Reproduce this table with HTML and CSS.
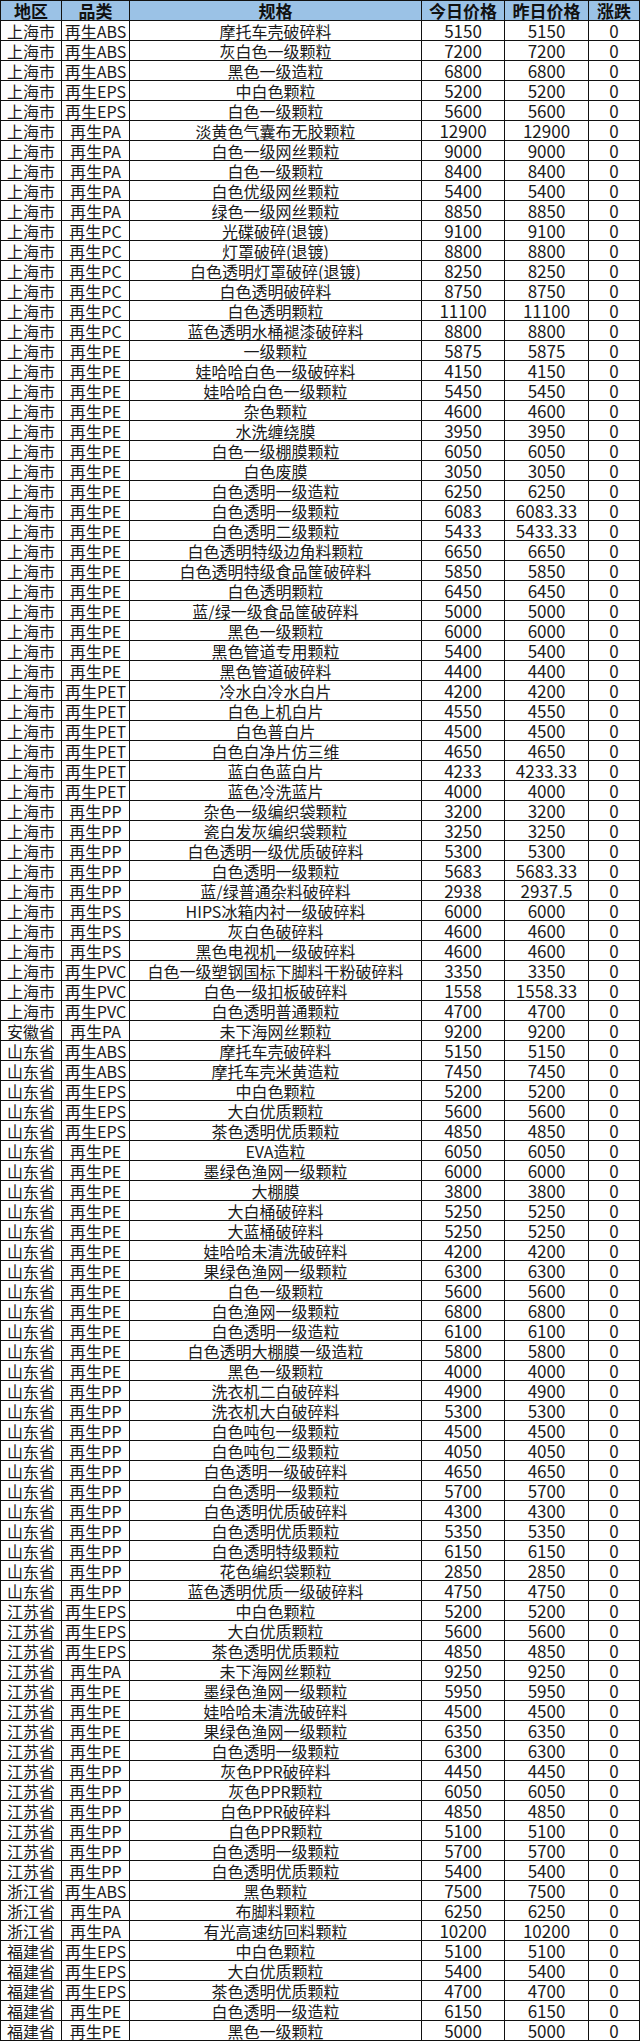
FILE: index.html
```html
<!DOCTYPE html>
<html lang="zh-CN">
<head>
<meta charset="utf-8">
<title>再生塑料价格</title>
<link rel="stylesheet" href="styles.css">
</head>
<body>
<table class="price-table">
<colgroup>
<col class="c-region"><col class="c-cat"><col class="c-spec"><col class="c-today"><col class="c-yest"><col class="c-chg">
</colgroup>
<thead>
<tr><th>地区</th><th>品类</th><th>规格</th><th>今日价格</th><th>昨日价格</th><th>涨跌</th></tr>
</thead>
<tbody>
<tr><td>上海市</td><td>再生ABS</td><td>摩托车壳破碎料</td><td class="num">5150</td><td class="num">5150</td><td class="num">0</td></tr>
<tr><td>上海市</td><td>再生ABS</td><td>灰白色一级颗粒</td><td class="num">7200</td><td class="num">7200</td><td class="num">0</td></tr>
<tr><td>上海市</td><td>再生ABS</td><td>黑色一级造粒</td><td class="num">6800</td><td class="num">6800</td><td class="num">0</td></tr>
<tr><td>上海市</td><td>再生EPS</td><td>中白色颗粒</td><td class="num">5200</td><td class="num">5200</td><td class="num">0</td></tr>
<tr><td>上海市</td><td>再生EPS</td><td>白色一级颗粒</td><td class="num">5600</td><td class="num">5600</td><td class="num">0</td></tr>
<tr><td>上海市</td><td>再生PA</td><td>淡黄色气囊布无胶颗粒</td><td class="num">12900</td><td class="num">12900</td><td class="num">0</td></tr>
<tr><td>上海市</td><td>再生PA</td><td>白色一级网丝颗粒</td><td class="num">9000</td><td class="num">9000</td><td class="num">0</td></tr>
<tr><td>上海市</td><td>再生PA</td><td>白色一级颗粒</td><td class="num">8400</td><td class="num">8400</td><td class="num">0</td></tr>
<tr><td>上海市</td><td>再生PA</td><td>白色优级网丝颗粒</td><td class="num">5400</td><td class="num">5400</td><td class="num">0</td></tr>
<tr><td>上海市</td><td>再生PA</td><td>绿色一级网丝颗粒</td><td class="num">8850</td><td class="num">8850</td><td class="num">0</td></tr>
<tr><td>上海市</td><td>再生PC</td><td>光碟破碎(退镀)</td><td class="num">9100</td><td class="num">9100</td><td class="num">0</td></tr>
<tr><td>上海市</td><td>再生PC</td><td>灯罩破碎(退镀)</td><td class="num">8800</td><td class="num">8800</td><td class="num">0</td></tr>
<tr><td>上海市</td><td>再生PC</td><td>白色透明灯罩破碎(退镀)</td><td class="num">8250</td><td class="num">8250</td><td class="num">0</td></tr>
<tr><td>上海市</td><td>再生PC</td><td>白色透明破碎料</td><td class="num">8750</td><td class="num">8750</td><td class="num">0</td></tr>
<tr><td>上海市</td><td>再生PC</td><td>白色透明颗粒</td><td class="num">11100</td><td class="num">11100</td><td class="num">0</td></tr>
<tr><td>上海市</td><td>再生PC</td><td>蓝色透明水桶褪漆破碎料</td><td class="num">8800</td><td class="num">8800</td><td class="num">0</td></tr>
<tr><td>上海市</td><td>再生PE</td><td>一级颗粒</td><td class="num">5875</td><td class="num">5875</td><td class="num">0</td></tr>
<tr><td>上海市</td><td>再生PE</td><td>娃哈哈白色一级破碎料</td><td class="num">4150</td><td class="num">4150</td><td class="num">0</td></tr>
<tr><td>上海市</td><td>再生PE</td><td>娃哈哈白色一级颗粒</td><td class="num">5450</td><td class="num">5450</td><td class="num">0</td></tr>
<tr><td>上海市</td><td>再生PE</td><td>杂色颗粒</td><td class="num">4600</td><td class="num">4600</td><td class="num">0</td></tr>
<tr><td>上海市</td><td>再生PE</td><td>水洗缠绕膜</td><td class="num">3950</td><td class="num">3950</td><td class="num">0</td></tr>
<tr><td>上海市</td><td>再生PE</td><td>白色一级棚膜颗粒</td><td class="num">6050</td><td class="num">6050</td><td class="num">0</td></tr>
<tr><td>上海市</td><td>再生PE</td><td>白色废膜</td><td class="num">3050</td><td class="num">3050</td><td class="num">0</td></tr>
<tr><td>上海市</td><td>再生PE</td><td>白色透明一级造粒</td><td class="num">6250</td><td class="num">6250</td><td class="num">0</td></tr>
<tr><td>上海市</td><td>再生PE</td><td>白色透明一级颗粒</td><td class="num">6083</td><td class="num">6083.33</td><td class="num">0</td></tr>
<tr><td>上海市</td><td>再生PE</td><td>白色透明二级颗粒</td><td class="num">5433</td><td class="num">5433.33</td><td class="num">0</td></tr>
<tr><td>上海市</td><td>再生PE</td><td>白色透明特级边角料颗粒</td><td class="num">6650</td><td class="num">6650</td><td class="num">0</td></tr>
<tr><td>上海市</td><td>再生PE</td><td>白色透明特级食品筐破碎料</td><td class="num">5850</td><td class="num">5850</td><td class="num">0</td></tr>
<tr><td>上海市</td><td>再生PE</td><td>白色透明颗粒</td><td class="num">6450</td><td class="num">6450</td><td class="num">0</td></tr>
<tr><td>上海市</td><td>再生PE</td><td>蓝/绿一级食品筐破碎料</td><td class="num">5000</td><td class="num">5000</td><td class="num">0</td></tr>
<tr><td>上海市</td><td>再生PE</td><td>黑色一级颗粒</td><td class="num">6000</td><td class="num">6000</td><td class="num">0</td></tr>
<tr><td>上海市</td><td>再生PE</td><td>黑色管道专用颗粒</td><td class="num">5400</td><td class="num">5400</td><td class="num">0</td></tr>
<tr><td>上海市</td><td>再生PE</td><td>黑色管道破碎料</td><td class="num">4400</td><td class="num">4400</td><td class="num">0</td></tr>
<tr><td>上海市</td><td>再生PET</td><td>冷水白冷水白片</td><td class="num">4200</td><td class="num">4200</td><td class="num">0</td></tr>
<tr><td>上海市</td><td>再生PET</td><td>白色上机白片</td><td class="num">4550</td><td class="num">4550</td><td class="num">0</td></tr>
<tr><td>上海市</td><td>再生PET</td><td>白色普白片</td><td class="num">4500</td><td class="num">4500</td><td class="num">0</td></tr>
<tr><td>上海市</td><td>再生PET</td><td>白色白净片仿三维</td><td class="num">4650</td><td class="num">4650</td><td class="num">0</td></tr>
<tr><td>上海市</td><td>再生PET</td><td>蓝白色蓝白片</td><td class="num">4233</td><td class="num">4233.33</td><td class="num">0</td></tr>
<tr><td>上海市</td><td>再生PET</td><td>蓝色冷洗蓝片</td><td class="num">4000</td><td class="num">4000</td><td class="num">0</td></tr>
<tr><td>上海市</td><td>再生PP</td><td>杂色一级编织袋颗粒</td><td class="num">3200</td><td class="num">3200</td><td class="num">0</td></tr>
<tr><td>上海市</td><td>再生PP</td><td>瓷白发灰编织袋颗粒</td><td class="num">3250</td><td class="num">3250</td><td class="num">0</td></tr>
<tr><td>上海市</td><td>再生PP</td><td>白色透明一级优质破碎料</td><td class="num">5300</td><td class="num">5300</td><td class="num">0</td></tr>
<tr><td>上海市</td><td>再生PP</td><td>白色透明一级颗粒</td><td class="num">5683</td><td class="num">5683.33</td><td class="num">0</td></tr>
<tr><td>上海市</td><td>再生PP</td><td>蓝/绿普通杂料破碎料</td><td class="num">2938</td><td class="num">2937.5</td><td class="num">0</td></tr>
<tr><td>上海市</td><td>再生PS</td><td>HIPS冰箱内衬一级破碎料</td><td class="num">6000</td><td class="num">6000</td><td class="num">0</td></tr>
<tr><td>上海市</td><td>再生PS</td><td>灰白色破碎料</td><td class="num">4600</td><td class="num">4600</td><td class="num">0</td></tr>
<tr><td>上海市</td><td>再生PS</td><td>黑色电视机一级破碎料</td><td class="num">4600</td><td class="num">4600</td><td class="num">0</td></tr>
<tr><td>上海市</td><td>再生PVC</td><td>白色一级塑钢国标下脚料干粉破碎料</td><td class="num">3350</td><td class="num">3350</td><td class="num">0</td></tr>
<tr><td>上海市</td><td>再生PVC</td><td>白色一级扣板破碎料</td><td class="num">1558</td><td class="num">1558.33</td><td class="num">0</td></tr>
<tr><td>上海市</td><td>再生PVC</td><td>白色透明普通颗粒</td><td class="num">4700</td><td class="num">4700</td><td class="num">0</td></tr>
<tr><td>安徽省</td><td>再生PA</td><td>未下海网丝颗粒</td><td class="num">9200</td><td class="num">9200</td><td class="num">0</td></tr>
<tr><td>山东省</td><td>再生ABS</td><td>摩托车壳破碎料</td><td class="num">5150</td><td class="num">5150</td><td class="num">0</td></tr>
<tr><td>山东省</td><td>再生ABS</td><td>摩托车壳米黄造粒</td><td class="num">7450</td><td class="num">7450</td><td class="num">0</td></tr>
<tr><td>山东省</td><td>再生EPS</td><td>中白色颗粒</td><td class="num">5200</td><td class="num">5200</td><td class="num">0</td></tr>
<tr><td>山东省</td><td>再生EPS</td><td>大白优质颗粒</td><td class="num">5600</td><td class="num">5600</td><td class="num">0</td></tr>
<tr><td>山东省</td><td>再生EPS</td><td>茶色透明优质颗粒</td><td class="num">4850</td><td class="num">4850</td><td class="num">0</td></tr>
<tr><td>山东省</td><td>再生PE</td><td>EVA造粒</td><td class="num">6050</td><td class="num">6050</td><td class="num">0</td></tr>
<tr><td>山东省</td><td>再生PE</td><td>墨绿色渔网一级颗粒</td><td class="num">6000</td><td class="num">6000</td><td class="num">0</td></tr>
<tr><td>山东省</td><td>再生PE</td><td>大棚膜</td><td class="num">3800</td><td class="num">3800</td><td class="num">0</td></tr>
<tr><td>山东省</td><td>再生PE</td><td>大白桶破碎料</td><td class="num">5250</td><td class="num">5250</td><td class="num">0</td></tr>
<tr><td>山东省</td><td>再生PE</td><td>大蓝桶破碎料</td><td class="num">5250</td><td class="num">5250</td><td class="num">0</td></tr>
<tr><td>山东省</td><td>再生PE</td><td>娃哈哈未清洗破碎料</td><td class="num">4200</td><td class="num">4200</td><td class="num">0</td></tr>
<tr><td>山东省</td><td>再生PE</td><td>果绿色渔网一级颗粒</td><td class="num">6300</td><td class="num">6300</td><td class="num">0</td></tr>
<tr><td>山东省</td><td>再生PE</td><td>白色一级颗粒</td><td class="num">5600</td><td class="num">5600</td><td class="num">0</td></tr>
<tr><td>山东省</td><td>再生PE</td><td>白色渔网一级颗粒</td><td class="num">6800</td><td class="num">6800</td><td class="num">0</td></tr>
<tr><td>山东省</td><td>再生PE</td><td>白色透明一级造粒</td><td class="num">6100</td><td class="num">6100</td><td class="num">0</td></tr>
<tr><td>山东省</td><td>再生PE</td><td>白色透明大棚膜一级造粒</td><td class="num">5800</td><td class="num">5800</td><td class="num">0</td></tr>
<tr><td>山东省</td><td>再生PE</td><td>黑色一级颗粒</td><td class="num">4000</td><td class="num">4000</td><td class="num">0</td></tr>
<tr><td>山东省</td><td>再生PP</td><td>洗衣机二白破碎料</td><td class="num">4900</td><td class="num">4900</td><td class="num">0</td></tr>
<tr><td>山东省</td><td>再生PP</td><td>洗衣机大白破碎料</td><td class="num">5300</td><td class="num">5300</td><td class="num">0</td></tr>
<tr><td>山东省</td><td>再生PP</td><td>白色吨包一级颗粒</td><td class="num">4500</td><td class="num">4500</td><td class="num">0</td></tr>
<tr><td>山东省</td><td>再生PP</td><td>白色吨包二级颗粒</td><td class="num">4050</td><td class="num">4050</td><td class="num">0</td></tr>
<tr><td>山东省</td><td>再生PP</td><td>白色透明一级破碎料</td><td class="num">4650</td><td class="num">4650</td><td class="num">0</td></tr>
<tr><td>山东省</td><td>再生PP</td><td>白色透明一级颗粒</td><td class="num">5700</td><td class="num">5700</td><td class="num">0</td></tr>
<tr><td>山东省</td><td>再生PP</td><td>白色透明优质破碎料</td><td class="num">4300</td><td class="num">4300</td><td class="num">0</td></tr>
<tr><td>山东省</td><td>再生PP</td><td>白色透明优质颗粒</td><td class="num">5350</td><td class="num">5350</td><td class="num">0</td></tr>
<tr><td>山东省</td><td>再生PP</td><td>白色透明特级颗粒</td><td class="num">6150</td><td class="num">6150</td><td class="num">0</td></tr>
<tr><td>山东省</td><td>再生PP</td><td>花色编织袋颗粒</td><td class="num">2850</td><td class="num">2850</td><td class="num">0</td></tr>
<tr><td>山东省</td><td>再生PP</td><td>蓝色透明优质一级破碎料</td><td class="num">4750</td><td class="num">4750</td><td class="num">0</td></tr>
<tr><td>江苏省</td><td>再生EPS</td><td>中白色颗粒</td><td class="num">5200</td><td class="num">5200</td><td class="num">0</td></tr>
<tr><td>江苏省</td><td>再生EPS</td><td>大白优质颗粒</td><td class="num">5600</td><td class="num">5600</td><td class="num">0</td></tr>
<tr><td>江苏省</td><td>再生EPS</td><td>茶色透明优质颗粒</td><td class="num">4850</td><td class="num">4850</td><td class="num">0</td></tr>
<tr><td>江苏省</td><td>再生PA</td><td>未下海网丝颗粒</td><td class="num">9250</td><td class="num">9250</td><td class="num">0</td></tr>
<tr><td>江苏省</td><td>再生PE</td><td>墨绿色渔网一级颗粒</td><td class="num">5950</td><td class="num">5950</td><td class="num">0</td></tr>
<tr><td>江苏省</td><td>再生PE</td><td>娃哈哈未清洗破碎料</td><td class="num">4500</td><td class="num">4500</td><td class="num">0</td></tr>
<tr><td>江苏省</td><td>再生PE</td><td>果绿色渔网一级颗粒</td><td class="num">6350</td><td class="num">6350</td><td class="num">0</td></tr>
<tr><td>江苏省</td><td>再生PE</td><td>白色透明一级颗粒</td><td class="num">6300</td><td class="num">6300</td><td class="num">0</td></tr>
<tr><td>江苏省</td><td>再生PP</td><td>灰色PPR破碎料</td><td class="num">4450</td><td class="num">4450</td><td class="num">0</td></tr>
<tr><td>江苏省</td><td>再生PP</td><td>灰色PPR颗粒</td><td class="num">6050</td><td class="num">6050</td><td class="num">0</td></tr>
<tr><td>江苏省</td><td>再生PP</td><td>白色PPR破碎料</td><td class="num">4850</td><td class="num">4850</td><td class="num">0</td></tr>
<tr><td>江苏省</td><td>再生PP</td><td>白色PPR颗粒</td><td class="num">5100</td><td class="num">5100</td><td class="num">0</td></tr>
<tr><td>江苏省</td><td>再生PP</td><td>白色透明一级颗粒</td><td class="num">5700</td><td class="num">5700</td><td class="num">0</td></tr>
<tr><td>江苏省</td><td>再生PP</td><td>白色透明优质颗粒</td><td class="num">5400</td><td class="num">5400</td><td class="num">0</td></tr>
<tr><td>浙江省</td><td>再生ABS</td><td>黑色颗粒</td><td class="num">7500</td><td class="num">7500</td><td class="num">0</td></tr>
<tr><td>浙江省</td><td>再生PA</td><td>布脚料颗粒</td><td class="num">6250</td><td class="num">6250</td><td class="num">0</td></tr>
<tr><td>浙江省</td><td>再生PA</td><td>有光高速纺回料颗粒</td><td class="num">10200</td><td class="num">10200</td><td class="num">0</td></tr>
<tr><td>福建省</td><td>再生EPS</td><td>中白色颗粒</td><td class="num">5100</td><td class="num">5100</td><td class="num">0</td></tr>
<tr><td>福建省</td><td>再生EPS</td><td>大白优质颗粒</td><td class="num">5400</td><td class="num">5400</td><td class="num">0</td></tr>
<tr><td>福建省</td><td>再生EPS</td><td>茶色透明优质颗粒</td><td class="num">4700</td><td class="num">4700</td><td class="num">0</td></tr>
<tr><td>福建省</td><td>再生PE</td><td>白色透明一级造粒</td><td class="num">6150</td><td class="num">6150</td><td class="num">0</td></tr>
<tr><td>福建省</td><td>再生PE</td><td>黑色一级颗粒</td><td class="num">5000</td><td class="num">5000</td><td class="num">0</td></tr>
</tbody>
</table>
</body>
</html>
```

FILE: styles.css
```css
html, body {
  margin: 0;
  padding: 0;
  background: #ffffff;
}

.price-table {
  border-collapse: collapse;
  table-layout: fixed;
  width: 639px;
  font-family: "Liberation Sans Narrow", "Noto Sans CJK SC", "Liberation Sans", sans-serif;
  color: #1a1a1a;
}

.c-region { width: 61px; }
.c-cat { width: 68px; }
.c-spec { width: 292px; }
.c-today { width: 83px; }
.c-yest { width: 84px; }
.c-chg { width: 51px; }

.price-table th,
.price-table td {
  border: 1px solid #111;
  height: 19px;
  padding: 0;
  text-align: center;
  vertical-align: middle;
  white-space: nowrap;
  line-height: 18px;
}

.price-table td {
  font-size: 16px;
  font-weight: 400;
}

.price-table td.num {
  font-size: 17px;
}

.price-table th {
  background: #9bc2e6;
  font-size: 17px;
  font-weight: 700;
  color: #111;
}
```
